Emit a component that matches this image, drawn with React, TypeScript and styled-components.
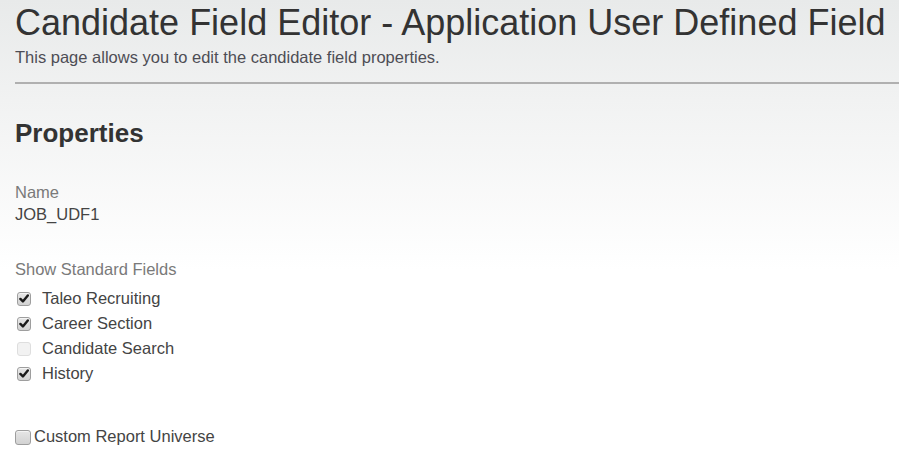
import React from "react";
import styled, { createGlobalStyle } from "styled-components";

const Global = createGlobalStyle`
  html, body { margin: 0; padding: 0; }
  body {
    font-family: "Liberation Sans", Arial, Helvetica, sans-serif;
    background: linear-gradient(#e8eaea 0px, #f1f2f2 100px, #ffffff 270px) no-repeat;
    background-color: #fff;
    min-height: 466px;
    color: #333;
  }
`;

const Page = styled.div`
  padding: 3px 0 0 15px;
  height: 466px;
  box-sizing: border-box;
  overflow: hidden;
`;

const Title = styled.h1`
  margin: 0;
  font-size: 36px;
  line-height: 40px;
  font-weight: normal;
  color: #333;
  white-space: nowrap;
`;

const Subtitle = styled.p`
  margin: 4px 0 0;
  font-size: 16.5px;
  line-height: 20px;
  color: #4d4d55;
`;

const Rule = styled.hr`
  margin: 15px 0 0;
  border: 0;
  height: 2px;
  background: #b0b0b0;
`;

const SectionTitle = styled.h2`
  margin: 34px 0 0;
  font-size: 26px;
  line-height: 30px;
  font-weight: bold;
  color: #333;
`;

const Field = styled.div`
  margin-top: 33px;
  display: flex;
  flex-direction: column;
`;

const Label = styled.div`
  font-size: 16.5px;
  line-height: 22px;
  color: #7a7a7a;
`;

const Value = styled.div`
  font-size: 16.5px;
  line-height: 22px;
  color: #444;
`;

const CheckList = styled.div`
  display: flex;
  flex-direction: column;
  margin-top: 6px;
  padding-left: 2px;
`;

const Row = styled.label<{ $gap?: number }>`
  display: flex;
  align-items: center;
  gap: ${(p) => p.$gap ?? 11}px;
  height: 25px;
  font-size: 16.5px;
  color: #444;
`;

const Box = styled.span<{ $disabled?: boolean; $w?: number; $h?: number; $offset?: number }>`
  width: ${(p) => p.$w ?? 14}px;
  height: ${(p) => p.$h ?? 14}px;
  margin-top: ${(p) => p.$offset ?? 0}px;
  box-sizing: border-box;
  border-radius: 3px;
  border: 1px solid ${(p) => (p.$disabled ? "#dedede" : "#9e9e9e")};
  background: ${(p) =>
    p.$disabled ? "#f2f2f2" : "linear-gradient(#e6e6e6, #d2d2d2)"};
  box-shadow: ${(p) => (p.$disabled ? "none" : "inset 0 1px 0 #f4f4f4")};
  display: flex;
  align-items: center;
  justify-content: center;
  flex: none;
`;

const Check = () => (
  <svg width="10" height="9" viewBox="0 0 10 9">
    <path
      d="M1.4 4.9 L3.9 7.4 L8.8 1.4"
      fill="none"
      stroke="#1a1a1a"
      strokeWidth="2.4"
      strokeLinecap="round"
      strokeLinejoin="round"
    />
  </svg>
);

const Spacer = styled.div`
  height: 38px;
`;

const items = [
  { label: "Taleo Recruiting", checked: true },
  { label: "Career Section", checked: true },
  { label: "Candidate Search", checked: false, disabled: true },
  { label: "History", checked: true },
];

export default function App() {
  return (
    <>
      <Global />
      <Page>
        <Title>Candidate Field Editor - Application User Defined Field</Title>
        <Subtitle>This page allows you to edit the candidate field properties.</Subtitle>
        <Rule />
        <SectionTitle>Properties</SectionTitle>
        <Field>
          <Label>Name</Label>
          <Value>JOB_UDF1</Value>
        </Field>
        <Field>
          <Label>Show Standard Fields</Label>
          <CheckList>
            {items.map((it) => (
              <Row key={it.label}>
                <Box $disabled={it.disabled}>{it.checked && <Check />}</Box>
                {it.label}
              </Row>
            ))}
          </CheckList>
        </Field>
        <Spacer />
        <Row $gap={3}>
          <Box $w={16} $h={15} $offset={2} />
          Custom Report Universe
        </Row>
      </Page>
    </>
  );
}
